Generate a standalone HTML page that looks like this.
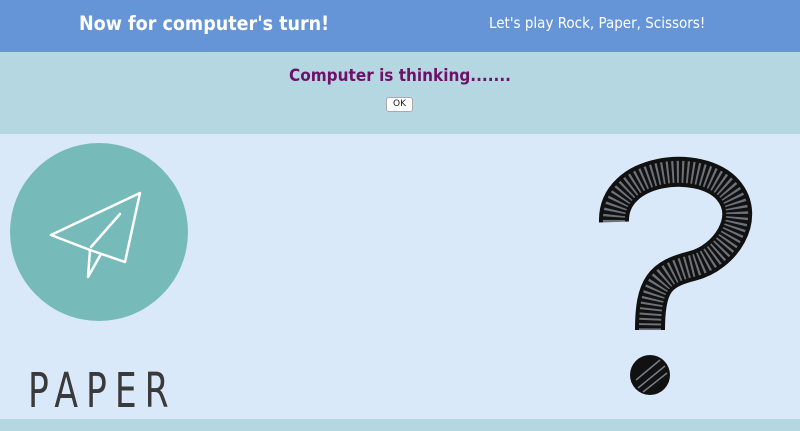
<!DOCTYPE html>
<html><head><meta charset="utf-8"><style>
*{margin:0;padding:0;box-sizing:border-box}
body{width:800px;height:431px;overflow:hidden;background:#dae9fa;font-family:"DejaVu Sans","Liberation Sans",sans-serif;position:relative}
.hdr{position:absolute;left:0;top:0;width:800px;height:52px;background:#6595d6;color:#fff}
.h1{position:absolute;left:79px;top:12px;font-size:19.5px;font-weight:bold;font-family:"DejaVu Sans Condensed","DejaVu Sans",sans-serif}
.h2{position:absolute;left:489px;top:14px;font-size:15px;font-family:"DejaVu Sans Condensed","DejaVu Sans",sans-serif}
.band{position:absolute;left:0;top:52px;width:800px;height:82px;background:#b4d7e2;text-align:center}
.think{position:absolute;left:0;width:800px;top:14px;color:#6d1268;font-size:17px;font-weight:bold;font-family:"DejaVu Sans Condensed","DejaVu Sans",sans-serif}
.ok{position:absolute;left:386px;top:45px;width:27px;height:15px;background:#fff;border:1px solid #aaa;border-radius:3px;font-size:9px;line-height:13px;color:#222}
.foot{position:absolute;left:0;top:419px;width:800px;height:12px;background:#b4d7e2}
.paper{position:absolute;left:28px;top:363px;font-family:"DejaVu Sans Condensed","Liberation Sans Narrow",sans-serif;font-size:48px;color:#3a3a3a;letter-spacing:10px;transform:scaleX(0.8);transform-origin:left;font-weight:300}
</style></head><body>
<div class="hdr"><div class="h1">Now for computer's turn!</div><div class="h2">Let's play Rock, Paper, Scissors!</div></div>
<div class="band"><div class="think">Computer is thinking.......</div><div class="ok">OK</div></div>
<svg style="position:absolute;left:0;top:0" width="800" height="431">
<circle cx="99" cy="232" r="89" fill="#76bbb9"/>
<g stroke="#fff" stroke-width="2.5" fill="none" stroke-linecap="round" stroke-linejoin="round">
<path d="M51,235 L140,193 L125,262 L90,250 Z"/>
<path d="M90,250 L88,277 L101,254"/>
<path d="M91,247 L120,214"/>
</g>
<path d="M614,222 C612,168 700,158 728,190 C752,218 725,258 692,266 C660,274 650,285 650,330" stroke="#111" stroke-width="30" fill="none"/>
<path d="M614,222 C612,168 700,158 728,190 C752,218 725,258 692,266 C660,274 650,285 650,330" stroke="#dae9fa" stroke-width="22" fill="none" stroke-dasharray="2 3" opacity="0.45"/>
<circle cx="650" cy="375" r="20" fill="#111"/>
<g stroke="#dae9fa" stroke-width="1.5" opacity="0.5"><path d="M636,380 L660,360 M638,388 L665,366 M643,392 L667,373"/></g>
</svg>
<div class="paper">PAPER</div>
<div class="foot"></div>
</body></html>
